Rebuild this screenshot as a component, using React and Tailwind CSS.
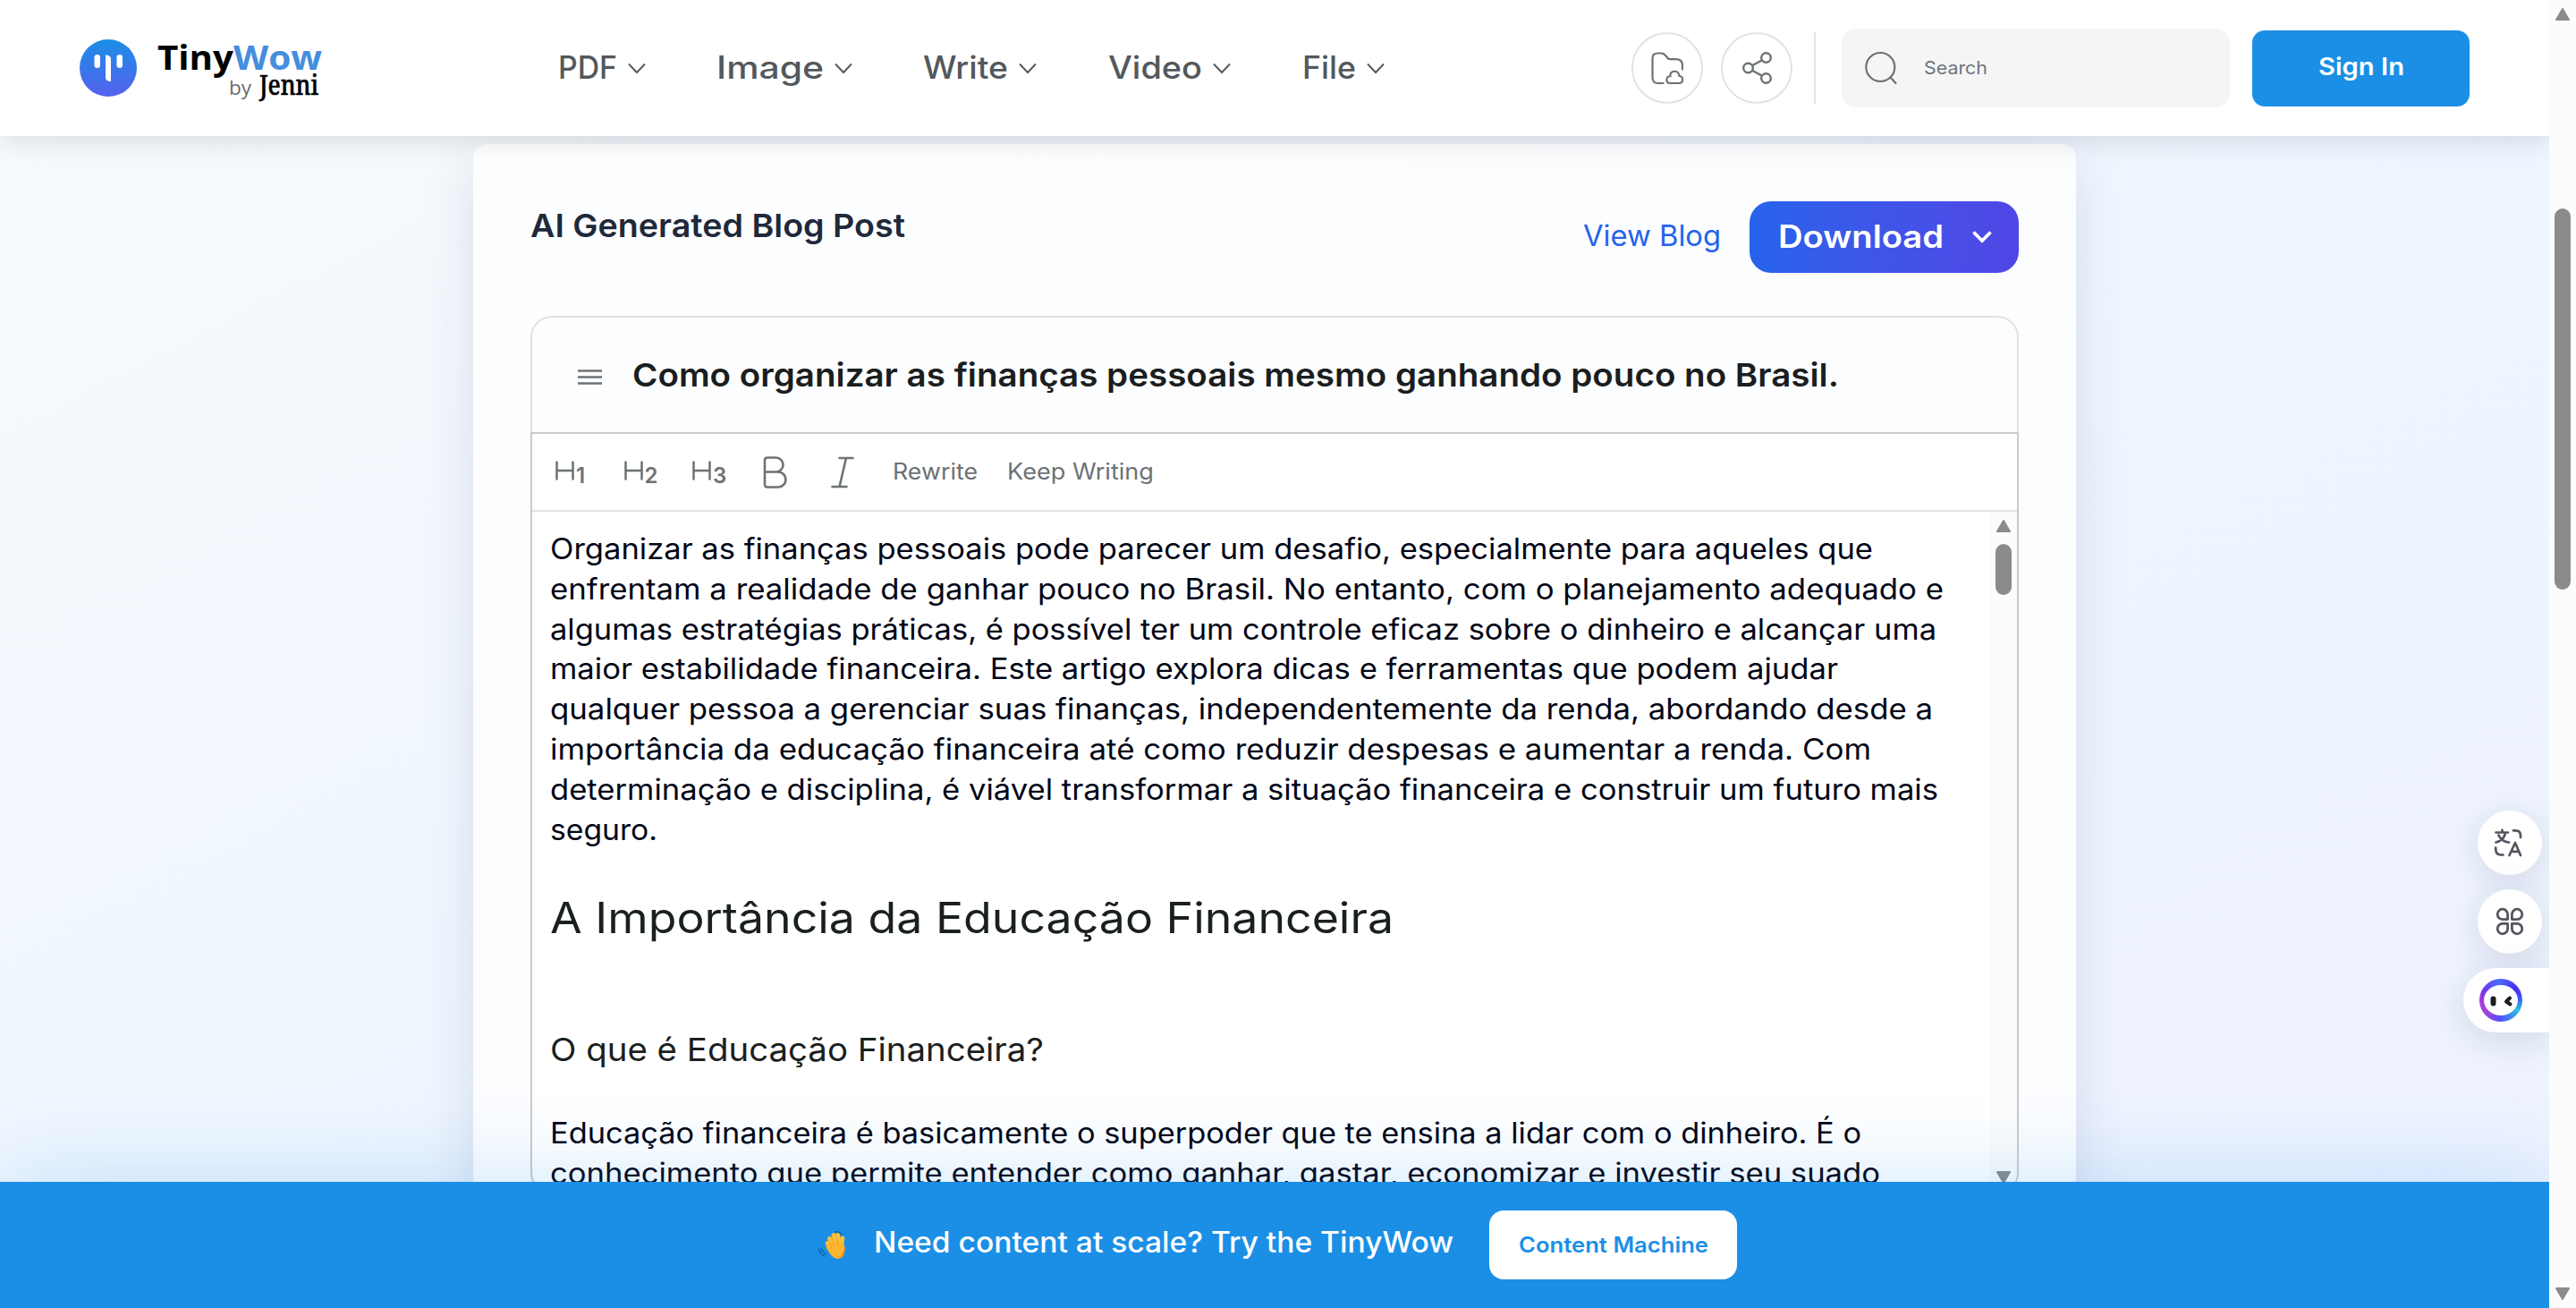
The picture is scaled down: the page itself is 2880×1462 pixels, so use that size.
import React, { useLayoutEffect, useRef } from "react";

/* Single line of text whose glyphs are widened so that it fills `w` pixels. */
function T({ w, children, className = "", as: Tag = "span" }) {
  const ref = useRef(null);
  useLayoutEffect(() => {
    const el = ref.current;
    el.style.transform = "none";
    const natural = el.getBoundingClientRect().width;
    el.style.transform = `scaleX(${w / natural})`;
  }, [w, children]);
  return (
    <Tag className={`block shrink-0 whitespace-nowrap ${className}`} style={{ width: w }}>
      <span ref={ref} className="inline-block origin-left align-top">{children}</span>
    </Tag>
  );
}

const nav = [
  ["PDF", 66, "w-[177px]"],
  ["Image", 120, "w-[231px]"],
  ["Write", 95, "w-[207px]"],
  ["Video", 105, "w-[217px]"],
  ["File", 60, "w-[92px]"],
];

const intro = [
  ["Organizar as finanças pessoais pode parecer um desafio, especialmente para aqueles que", 1479],
  ["enfrentam a realidade de ganhar pouco no Brasil. No entanto, com o planejamento adequado e", 1558],
  ["algumas estratégias práticas, é possível ter um controle eficaz sobre o dinheiro e alcançar uma", 1550],
  ["maior estabilidade financeira. Este artigo explora dicas e ferramentas que podem ajudar", 1440],
  ["qualquer pessoa a gerenciar suas finanças, independentemente da renda, abordando desde a", 1546],
  ["importância da educação financeira até como reduzir despesas e aumentar a renda. Com", 1477],
  ["determinação e disciplina, é viável transformar a situação financeira e construir um futuro mais", 1552],
  ["seguro.", 120],
];

const second = [
  ["Educação financeira é basicamente o superpoder que te ensina a lidar com o dinheiro. É o", 1466],
  ["conhecimento que permite entender como ganhar, gastar, economizar e investir seu suado", 1487],
];

function Arrow({ down = false, className = "" }) {
  return (
    <svg viewBox="0 0 18 14" className={`h-[14px] w-[18px] shrink-0 ${className}`}>
      <path
        d={down ? "M2 1H16L9 13Z" : "M2 13H16L9 1Z"}
        fill="#8b8b8b"
        stroke="#8b8b8b"
        strokeWidth="2"
        strokeLinejoin="round"
      />
    </svg>
  );
}

function Logo() {
  return (
    <div className="ml-[89px] flex w-[535px] items-center">
      <svg viewBox="0 0 64 64" className="h-16 w-16 shrink-0">
        <defs>
          <linearGradient id="lg" x1="0" y1="0" x2="0" y2="1">
            <stop offset="0" stopColor="#1b8fe6" />
            <stop offset="1" stopColor="#5560ee" />
          </linearGradient>
        </defs>
        <circle cx="32" cy="32" r="32" fill="url(#lg)" />
        <rect x="16.5" y="17" width="6.5" height="15" rx="3.2" fill="#fff" />
        <rect x="41.5" y="17" width="6.5" height="15" rx="3.2" fill="#fff" />
        <path d="M29 17.5c3.5 0 6 1.500 6 4.500v25c-3.500 0-6-1.500-6-4.500z" fill="#fff" />
      </svg>
      <div className="ml-[23px] flex w-[184px] flex-col">
        <div className="flex pt-[7px] font-['Open_Sans',sans-serif] text-[37px] leading-[32px] font-bold">
          <T w={85} className="text-black">Tiny</T>
          <T w={99} className="text-[#458ddd]">Wow</T>
        </div>
        <div className="flex items-baseline justify-end gap-[9px] pr-[4px] leading-[30px]">
          <T w={25} className="font-['Open_Sans',sans-serif] text-[22px] text-[#6b6b6b]">by</T>
          <T w={66} className="font-['Noto_Serif','Liberation_Serif',serif] text-[30px] font-medium text-black [-webkit-text-stroke:0.6px_black]">Jenni</T>
        </div>
      </div>
    </div>
  );
}

function Header() {
  return (
    <header className="relative z-10 flex h-[152px] shrink-0 items-center bg-white shadow-[0_4px_30px_rgba(0,0,0,0.13)]">
      <Logo />
      <nav className="flex w-[1200px] text-[#53585c]">
        {nav.map(([label, w, cls]) => (
          <div key={label} className={`flex items-center gap-[12px] ${cls}`}>
            <T w={w} className="mb-[2px] text-[35px] leading-[54px] font-medium">{label}</T>
            <svg viewBox="0 0 20 13" className="h-[13px] w-5 shrink-0" fill="none" stroke="#53585c" strokeWidth="1.9">
              <path d="M1 1.500L10 11L19 1.500" />
            </svg>
          </div>
        ))}
      </nav>
      <div className="flex items-center gap-5 text-[#6c7276]">
        <div className="flex h-20 w-20 items-center justify-center rounded-full border-2 border-[#e2e2e2]">
          <svg viewBox="0 0 36 36" className="h-9 w-9" fill="none" stroke="currentColor" strokeWidth="2.200" strokeLinecap="round">
            <path d="M13.500 35H8C3 35 1.500 33 1.500 28V8c0-5 1.500-6.500 6.500-6.500h3c3 0 4 .800 5.500 3l2 2.500c.700 1 1.500 1.200 3 1.200h6c5 0 7.500 1.800 7.500 6.800v4.500" />
            <path d="M21.500 35h9.500c5.500 0 5.500-7.500.500-8-.500-7.500-11.500-6.500-10 0-5.500.500-5.500 8 0 8z" />
          </svg>
        </div>
        <div className="flex h-20 w-20 items-center justify-center rounded-full border-2 border-[#e2e2e2]">
          <svg viewBox="0 0 34 36" className="h-9 w-[34px]" fill="none" stroke="currentColor" strokeWidth="2.400">
            <circle cx="7.500" cy="18" r="5.300" />
            <circle cx="27.500" cy="6.500" r="5.300" />
            <circle cx="27.500" cy="29.500" r="5.300" />
            <path d="M12 15.300L23 9.300M12 20.700L23 26.700" />
          </svg>
        </div>
      </div>
      <div className="ml-6 h-20 w-0.5 bg-[#e2e2e2]" />
      <div className="ml-[29px] flex h-[88px] w-[434px] items-center rounded-2xl bg-[#f5f5f5] pl-[26px]">
        <svg viewBox="0 0 36 38" className="h-[38px] w-9 text-[#6c7276]" fill="none" stroke="currentColor" strokeWidth="2.200" strokeLinecap="round">
          <circle cx="17.300" cy="18" r="16" />
          <path d="M28.500 29.500L34.500 36" />
        </svg>
        <T w={71} className="ml-[30px] text-[20px] leading-[30px] text-[#6c757d]">Search</T>
      </div>
      <div className="ml-[25px] flex h-[85px] w-[243px] items-center justify-center rounded-[14px] bg-[#1b8fe6]">
        <T w={96} className="mb-[2px] text-[27px] leading-[40px] font-semibold text-white">Sign In</T>
      </div>
    </header>
  );
}

function Toolbar() {
  return (
    <div className="flex h-[87px] shrink-0 items-center border-b-2 border-[#e2e2e2] pl-[26px] text-[#6c7276]">
      {["1", "2", "3"].map((n) => (
        <div key={n} className="flex w-[76.500px] items-end">
          <svg viewBox="0 0 21 22" className="mb-[4px] h-[22px] w-[21px]" fill="none" stroke="currentColor" strokeWidth="2.500" strokeLinecap="round">
            <path d="M1.500 1.500V20.500M19.500 1.500V20.500M1.500 11H19.500" />
          </svg>
          <span className="ml-[2px] h-[22px] text-[24px] leading-[26px] font-semibold">{n}</span>
        </div>
      ))}
      <svg viewBox="0 0 28 36" className="ml-[2px] h-9 w-7" fill="none" stroke="currentColor" strokeWidth="2.600" strokeLinejoin="round">
        <path d="M2 4.500q0-3 3-3h9.500a8 8 0 0 1 0 16H2zM2 17.500h15a8.500 8.500 0 0 1 0 17H5q-3 0-3-3z" />
      </svg>
      <svg viewBox="0 0 26 36" className="ml-[48px] h-9 w-[26px]" fill="none" stroke="currentColor" strokeWidth="2.600" strokeLinecap="round">
        <path d="M9.500 2H24.500M1.500 34H17.500M17 2L9.500 34" />
      </svg>
      <T w={95} className="mb-[2px] ml-[43px] text-[25px] leading-[36px]">Rewrite</T>
      <T w={164} className="mb-[2px] ml-[33px] text-[25px] leading-[36px]">Keep Writing</T>
    </div>
  );
}

function Card() {
  return (
    <section className="ml-[529px] mt-[9px] h-[1400px] w-[1792px] rounded-2xl bg-white/80 px-16 pt-16 shadow-[0_20px_60px_rgba(30,41,90,0.12)]">
      <div className="flex h-20 items-start">
        <T as="h1" w={419} className="text-[36px] leading-[54px] font-semibold text-[#1e293b]">AI Generated Blog Post</T>
        <div className="ml-auto flex h-20 items-center">
          <T w={154} className="mb-[2px] text-[32px] leading-[48px] text-[#2563eb]">View Blog</T>
          <div className="ml-8 flex h-20 w-[301px] items-center rounded-3xl bg-gradient-to-r from-[#2563eb] to-[#4f46e5] pl-8 text-white">
            <T w={185} className="mb-[3px] text-[35px] leading-[54px] font-semibold">Download</T>
            <svg viewBox="0 0 22 14" className="ml-8 h-[14px] w-[22px]" fill="none" stroke="currentColor" strokeWidth="3.800">
              <path d="M1.500 1.500L11 11L20.500 1.500" />
            </svg>
          </div>
        </div>
      </div>

      <div className="mt-12 flex h-[130px] items-center rounded-t-3xl border-2 border-b-0 border-[#e2e2e2] pl-[51px]">
        <svg viewBox="0 0 27 17" className="mt-[4px] h-[17px] w-[27px]" stroke="#6c7276" strokeWidth="2.400">
          <path d="M0 1.500H27M0 8.500H27M0 15.500H27" />
        </svg>
        <T as="h2" w={1349} className="ml-[34px] text-[36px] leading-[56px] font-semibold text-[#1a1e20]">
          Como organizar as finanças pessoais mesmo ganhando pouco no Brasil.
        </T>
      </div>

      <div className="flex h-[852px] flex-col overflow-hidden rounded-b-3xl border-2 border-[#c9cbcb] bg-white">
        <Toolbar />
        <div className="flex min-h-0 flex-1">
          <div className="flex-1 overflow-hidden pl-5 pt-5 text-[32px] leading-[44.800px] text-[#020617]">
            {intro.map(([t, w]) => (
              <T key={t} w={w}>{t}</T>
            ))}
            <T as="h2" w={943} className="mt-10 text-[48px] leading-[72px] text-[#1a2020]">A Importância da Educação Financeira</T>
            <T as="h3" w={552} className="mt-[84px] text-[36px] leading-[54px] text-[#1a2020]">O que é Educação Financeira?</T>
            <div className="mt-[45px]">
              {second.map(([t, w]) => (
                <T key={t} w={w}>{t}</T>
              ))}
            </div>
          </div>
          <div className="flex w-[30px] flex-col items-center bg-[#fcfcfc] pt-[9px] pb-[10px]">
            <Arrow />
            <div className="mt-[13px] h-[57px] w-[18px] rounded-full bg-[#8b8b8b]" />
            <Arrow down className="mt-auto" />
          </div>
        </div>
      </div>
    </section>
  );
}

function Banner() {
  return (
    <footer className="relative z-10 flex h-[141px] shrink-0 items-center bg-[#1b8fe6] pl-[914px] shadow-[0_0_100px_rgba(27,143,230,0.22)]">
      <svg viewBox="0 0 32 32" className="h-8 w-8 shrink-0">
        <g fill="none" stroke="#fbbf3c" strokeWidth="4.800" strokeLinecap="round">
          <path d="M18 18L13.500 8.500M20 16L18 4.500M23 15.500L23 4M26 17.500L28 8M16 21L11 13.500" />
        </g>
        <path d="M10 15L24 11.500L30 15C31.500 25 28.500 31 23 31C17.500 31 14 26 9.500 18Z" fill="#fdb52f" />
        <path d="M16 19L13 11M19 17L16.500 7.500M22.500 16L21 6.500" fill="none" stroke="#e99a25" strokeWidth=".800" />
        <path d="M30.500 17.500C31 25 28.500 31 23 31C27 28 29 23 30.500 17.500Z" fill="#f08c1c" />
        <path d="M1.500 20C2 24 4 26.500 8 28M4.500 19.500C5 22.500 6.500 24 9 25.500M20 .800C23 .500 25.500 2 27 4" fill="none" stroke="#15609c" strokeWidth="1.400" strokeLinecap="round" />
      </svg>
      <T w={648} className="ml-[31px] mb-[6px] text-[32px] leading-[48px] font-medium text-white">Need content at scale? Try the TinyWow</T>
      <div className="ml-10 flex h-[77px] w-[277px] items-center justify-center rounded-2xl bg-white">
        <T w={212} className="text-[24px] leading-[36px] font-semibold text-[#1b8fe6]">Content Machine</T>
      </div>
    </footer>
  );
}

function FloatingTools() {
  const shadow = "shadow-[0_8px_40px_rgba(20,30,60,0.13)]";
  return (
    <div className="absolute right-0 top-[906px] z-20 flex w-24 flex-col items-end gap-4">
      <div className={`mr-2 flex h-[72px] w-[72px] items-center justify-center rounded-full bg-white pr-1 ${shadow}`}>
        <svg viewBox="0 0 32 32" className="h-8 w-8" fill="none" stroke="#55555f" strokeWidth="2.700" strokeLinecap="round" strokeLinejoin="round">
          <path d="M2.500 4.500H16M9.500 1.800V4.500M5.500 7.500C7.500 12 12 15 17 15.500M13 5C12 10.500 8 14 2.500 15.500" />
          <path d="M22 2.300H24.500C28.500 2.300 30 4 30 8V10M2.200 21.500V23C2.200 27.500 4 29.500 8 29.500H10.500" />
          <path d="M17.500 30L24 16L30 30M20 25.800H28" />
        </svg>
      </div>
      <div className={`mr-2 flex h-[72px] w-[72px] items-center justify-center rounded-full bg-white ${shadow}`}>
        <svg viewBox="0 0 32 32" className="h-8 w-8" fill="none" stroke="#55555f" strokeWidth="2.800" strokeLinejoin="round">
          <path d="M13.600 13.600H8A5.700 5.700 0 1 1 13.600 8Z" />
          <path d="M18.400 13.600V8A5.700 5.700 0 1 1 24 13.600Z" />
          <path d="M13.600 18.400V24A5.700 5.700 0 1 1 8 18.400Z" />
          <path d="M18.400 18.400H24A5.700 5.700 0 1 1 18.400 24Z" />
        </svg>
      </div>
      <div className={`flex h-[72px] w-24 items-center rounded-l-full bg-white pl-[18px] ${shadow}`}>
        <div className="flex h-12 w-12 items-center justify-center rounded-full bg-[conic-gradient(#4c66fa,#4a2cf5_50deg,#3f5af8_85deg,#2cc4dc_120deg,#3f7df5_155deg,#5550fa_185deg,#a445dc_230deg,#a93ae0_265deg,#7035ee_300deg,#4c66fa_345deg,#4c66fa)]">
          <svg viewBox="0 0 38 34" className="h-[34px] w-[38px]">
            <ellipse cx="19" cy="17" rx="19" ry="17" fill="#fff" />
            <rect x="7.500" y="12.500" width="6" height="11" rx="3" fill="#1d1d1f" />
            <path d="M29 14.500L25 18.500L29.500 21.500" fill="none" stroke="#1d1d1f" strokeWidth="4" strokeLinecap="round" strokeLinejoin="round" />
          </svg>
        </div>
      </div>
    </div>
  );
}

export default function App() {
  return (
    <div className="flex h-[1462px] w-[2880px] overflow-hidden font-[Inter,sans-serif]">
      <div className="relative flex w-[2850px] flex-col overflow-hidden bg-gradient-to-br from-slate-50 via-blue-50 to-indigo-50">
        <Header />
        <main className="min-h-0 flex-1 overflow-hidden">
          <Card />
        </main>
        <FloatingTools />
        <Banner />
      </div>
      <div className="flex w-[30px] flex-col items-center bg-[#fcfcfc] pt-[9px] pb-[9px]">
        <Arrow />
        <div className="mt-[210px] h-[426px] w-[18px] rounded-full bg-[#8b8b8b]" />
        <Arrow down className="mt-auto" />
      </div>
    </div>
  );
}
